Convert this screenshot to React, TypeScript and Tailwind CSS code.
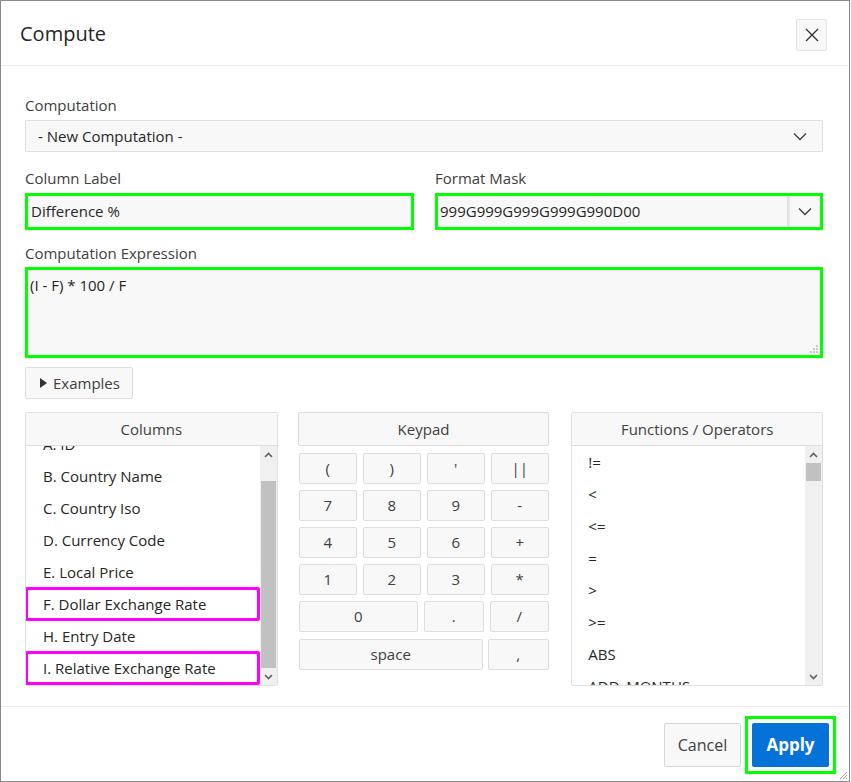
import React from "react";

const font = { fontFamily: '"Open Sans", "Noto Sans", sans-serif' };

function Chevron({ className = "" }: { className?: string }) {
  return (
    <svg width="14" height="9" viewBox="0 0 14 9" className={className}>
      <path d="M1 1.5 L7 7.5 L13 1.5" fill="none" stroke="#404040" strokeWidth="1.4" />
    </svg>
  );
}

function ScrollArrow({ up }: { up: boolean }) {
  return (
    <svg width="9" height="6" viewBox="0 0 9 6">
      {up ? (
        <path d="M1 5 L4.5 1.5 L8 5" fill="none" stroke="#606060" strokeWidth="1.6" />
      ) : (
        <path d="M1 1 L4.5 4.5 L8 1" fill="none" stroke="#606060" strokeWidth="1.6" />
      )}
    </svg>
  );
}

const columns = [
  { t: "A. ID" },
  { t: "B. Country Name" },
  { t: "C. Country Iso" },
  { t: "D. Currency Code" },
  { t: "E. Local Price" },
  { t: "F. Dollar Exchange Rate", hl: true },
  { t: "H. Entry Date" },
  { t: "I. Relative Exchange Rate", hl: true },
];

const funcs = ["!=", "<", "<=", "=", ">", ">=", "ABS", "ADD_MONTHS"];

function Key({ label, w }: { label: string; w: string }) {
  return (
    <div
      className={`${w} h-[31px] flex items-center justify-center bg-[#f8f8f8] border border-[#dedede] rounded-[2px] text-[15px] text-[#404040]`}
    >
      {label}
    </div>
  );
}

export default function App() {
  return (
    <div style={font} className="w-[850px] h-[782px] bg-white border border-[#8a8a8a] flex flex-col text-[#262626]">
      {/* Header */}
      <div className="h-[65px] shrink-0 flex items-center justify-between pl-[19px] pr-[22px] border-b border-[#ececec]">
        <div className="text-[20px] text-[#262626] mt-[1px]">Compute</div>
        <div className="w-[31px] h-[32px] mt-[3px] flex items-center justify-center bg-[#f8f8f8] border border-[#e2e2e2] rounded-[2px]">
          <svg width="14" height="14" viewBox="0 0 14 14">
            <path d="M1 1 L13 13 M13 1 L1 13" stroke="#303030" strokeWidth="1.3" />
          </svg>
        </div>
      </div>

      {/* Body */}
      <div className="flex-1 pl-[24px] pr-[26px] pt-[28px] text-[15px]">
        <div className="h-[22px] leading-[22px] text-[#404040]">Computation</div>
        <div className="mt-[4px] h-[32px] flex items-center justify-between bg-[#f8f8f8] border border-[#e0e0e0] rounded-[2px] pl-[12px] pr-[15px] text-[#262626]">
          <span>- New Computation -</span>
          <Chevron />
        </div>

        <div className="mt-[15px] flex gap-[21px]">
          <div className="w-[389px] flex flex-col">
            <div className="h-[22px] leading-[22px] text-[#404040]">Column Label</div>
            <div className="mt-[4px] h-[37px] border-[3px] border-[#00ff00] bg-[#f8f8f8] flex items-center pl-[3px]">
              Difference %
            </div>
          </div>
          <div className="flex-1 flex flex-col">
            <div className="h-[22px] leading-[22px] text-[#404040]">Format Mask</div>
            <div className="mt-[4px] h-[37px] border-[3px] border-[#00ff00] bg-[#f8f8f8] flex items-center">
              <span className="flex-1 pl-[2px]">999G999G999G999G990D00</span>
              <div className="w-[33px] h-full border-l-[3px] border-[#e4e4e4] flex items-center justify-center">
                <Chevron />
              </div>
            </div>
          </div>
        </div>

        <div className="mt-[12px] h-[22px] leading-[22px] text-[#404040]">Computation Expression</div>
        <div className="relative mt-[3px] h-[91px] border-[3px] border-[#00ff00] bg-[#f8f8f8] pl-[2px] pt-[4px]">
          (I - F) * 100 / F
          <svg className="absolute right-[2px] bottom-[2px]" width="8" height="8" viewBox="0 0 8 8">
            <rect x="6" y="0" width="2" height="2" fill="#c8c8c8" />
            <rect x="3" y="3" width="2" height="2" fill="#c8c8c8" />
            <rect x="6" y="3" width="2" height="2" fill="#c8c8c8" />
            <rect x="0" y="6" width="2" height="2" fill="#c8c8c8" />
            <rect x="3" y="6" width="2" height="2" fill="#c8c8c8" />
            <rect x="6" y="6" width="2" height="2" fill="#c8c8c8" />
          </svg>
        </div>

        <div className="mt-[9px] w-[108px] h-[32px] flex items-center bg-[#f8f8f8] border border-[#dedede] rounded-[2px] pl-[14px] gap-[6px] text-[#404040]">
          <svg width="7" height="10" viewBox="0 0 7 10">
            <path d="M0 0 L7 5 L0 10 Z" fill="#333" />
          </svg>
          <span>Examples</span>
        </div>

        <div className="mt-[13px] flex">
          {/* Columns */}
          <div className="w-[253px] h-[274px] border border-[#e0e0e0] rounded-[2px] flex flex-col">
            <div className="h-[33px] shrink-0 flex items-center justify-center bg-[#f8f8f8] border-b border-[#dcdcdc] text-[#404040]">
              Columns
            </div>
            <div className="flex-1 flex overflow-hidden">
              <div className="flex-1 overflow-hidden">
                <div className="mt-[-18px]">
                  {columns.map((c) => (
                    <div key={c.t} className="relative h-[32px] flex items-center pl-[17px] text-[#262626] whitespace-nowrap">
                      {c.t}
                      {c.hl && (
                        <span className="absolute left-[-1px] right-0 top-[-1px] bottom-[-1px] border-[3px] border-[#ff00ff] rounded-[2px]" />
                      )}
                    </div>
                  ))}
                </div>
              </div>
              <div className="w-[17px] bg-[#f0f0f0] flex flex-col items-center">
                <div className="h-[17px] flex items-center justify-center"><ScrollArrow up /></div>
                <div className="w-[15px] h-[187px] mt-[18px] bg-[#c1c1c1]" />
                <div className="flex-1" />
                <div className="h-[17px] flex items-center justify-center"><ScrollArrow up={false} /></div>
              </div>
            </div>
          </div>

          {/* Keypad */}
          <div className="ml-[20px] w-[252px] flex flex-col">
            <div className="h-[34px] flex items-center justify-center bg-[#f8f8f8] border border-[#dcdcdc] rounded-[2px] text-[#404040]">
              Keypad
            </div>
            <div className="mt-[7px] flex flex-col gap-[6px]">
              {[
                ["(", ")", "'", "||"],
                ["7", "8", "9", "-"],
                ["4", "5", "6", "+"],
                ["1", "2", "3", "*"],
              ].map((row, i) => (
                <div key={i} className="flex gap-[6px] pl-[1px]">
                  {row.map((k) => (
                    <Key key={k} label={k} w="w-[58px]" />
                  ))}
                </div>
              ))}
              <div className="flex gap-[6px] pl-[1px]">
                <Key label="0" w="w-[119px]" />
                <Key label="." w="w-[60px]" />
                <Key label="/" w="w-[59px]" />
              </div>
              <div className="flex gap-[5px] pl-[1px] mt-[1px]">
                <Key label="space" w="w-[184px]" />
                <Key label="," w="w-[61px]" />
              </div>
            </div>
          </div>

          {/* Functions */}
          <div className="ml-[22px] w-[252px] h-[274px] border border-[#e0e0e0] rounded-[2px] flex flex-col">
            <div className="h-[33px] shrink-0 flex items-center justify-center bg-[#f8f8f8] border-b border-[#dcdcdc] text-[#404040]">
              Functions / Operators
            </div>
            <div className="flex-1 flex overflow-hidden">
              <div className="flex-1 overflow-hidden">
                {funcs.map((f) => (
                  <div key={f} className="h-[32px] flex items-center pl-[16px] text-[#262626] whitespace-nowrap">
                    {f}
                  </div>
                ))}
              </div>
              <div className="w-[17px] bg-[#f0f0f0] flex flex-col items-center">
                <div className="h-[17px] flex items-center justify-center"><ScrollArrow up /></div>
                <div className="w-[15px] h-[18px] bg-[#c1c1c1]" />
                <div className="flex-1" />
                <div className="h-[17px] flex items-center justify-center"><ScrollArrow up={false} /></div>
              </div>
            </div>
          </div>
        </div>
      </div>

      {/* Footer */}
      <div className="relative h-[75px] shrink-0 border-t border-[#ececec] flex items-start justify-end pr-[13px] pt-[9px] gap-[4px]">
        <div className="mt-[7px] w-[77px] h-[44px] flex items-center justify-center bg-[#f8f8f8] border border-[#d6d6d6] rounded-[2px] text-[16px] text-[#404040]">
          Cancel
        </div>
        <div className="border-[3px] border-[#00ff00] p-[4px] bg-white">
          <div className="w-[77px] h-[44px] flex items-center justify-center bg-[#0572d8] rounded-[2px] text-[17px] font-bold text-white">
            Apply
          </div>
        </div>
        <svg className="absolute right-[1px] bottom-[1px]" width="10" height="10" viewBox="0 0 10 10">
          <path d="M9 2 L2 9 M9 5 L5 9 M9 8 L8 9" stroke="#a0a0a0" strokeWidth="1" />
        </svg>
      </div>
    </div>
  );
}
